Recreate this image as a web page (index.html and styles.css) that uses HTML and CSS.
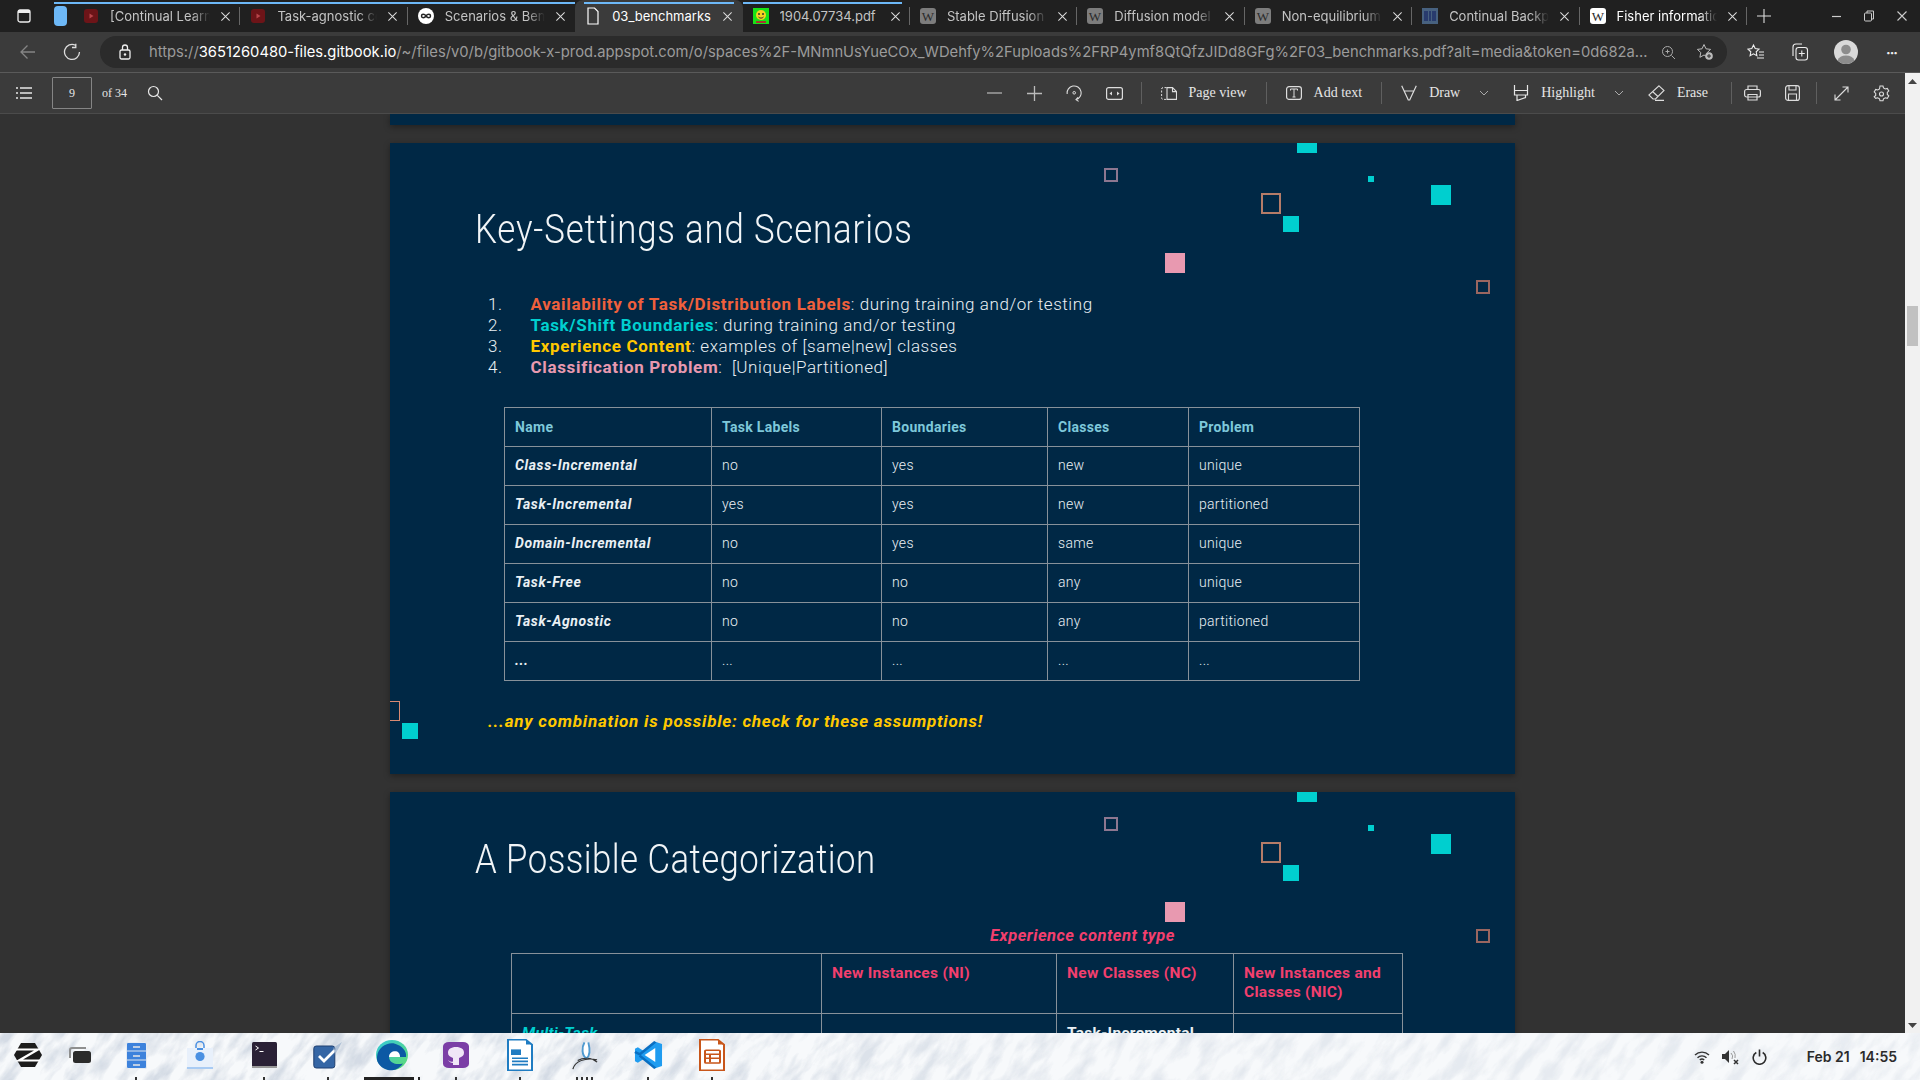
FILE: index.html
```html
<!DOCTYPE html>
<html lang="en">
  <head>
    <meta charset="UTF-8" />
    <title>03_benchmarks</title>
    <link rel="stylesheet" href="styles.css">
  </head>
  <body>
    <svg class="defs" width="0" height="0">
      <symbol id="x" viewBox="0 0 12 12"><path d="M1.5 1.5l9 9M10.5 1.5l-9 9" fill="none" stroke="currentColor" stroke-width="1.1"/></symbol>
      <symbol id="yt" viewBox="0 0 16 16"><rect x="1" y="1" width="14" height="14" rx="3" fill="#6d1418"/><path d="M6.5 5.5l4 2.5-4 2.5z" fill="#b8454a"/></symbol>
      <symbol id="wiki" viewBox="0 0 16 16"><rect width="16" height="16" rx="3" fill="currentColor"/><text x="8" y="12.5" font-family="Liberation Serif" font-size="13" text-anchor="middle" fill="#2b2b2b">W</text></symbol>
    </svg>

    <div class="tabbar">
      <div class="win-icon">
        <svg width="14" height="14" viewBox="0 0 14 14"><rect x="1" y="1" width="12" height="12" rx="2" fill="none" stroke="#eee" stroke-width="1.3"/><rect x="1" y="1" width="12" height="3" fill="#eee"/></svg>
      </div>
      <div class="pinned"><span class="pill"></span></div>
      <div class="tab strip"><svg class="ico" width="16" height="16"><use href="#yt"/></svg><span class="title">[Continual Learning with Deep</span><svg class="close" width="11" height="11"><use href="#x"/></svg></div>
      <div class="tab strip"><svg class="ico" width="16" height="16"><use href="#yt"/></svg><span class="title">Task-agnostic continual learning</span><svg class="close" width="11" height="11"><use href="#x"/></svg></div>
      <div class="tab strip no-sep"><svg class="ico" width="16" height="16" viewBox="0 0 16 16"><circle cx="8" cy="8" r="8" fill="#fff"/><path d="M8 8C6.5 5.8 3.5 5.8 3.5 8s3 2.2 4.5 0 4.5-2.2 4.5 0-3 2.2-4.5 0z" fill="none" stroke="#222" stroke-width="1.5"/></svg><span class="title">Scenarios &amp; Benchmarks</span><svg class="close" width="11" height="11"><use href="#x"/></svg></div>
      <div class="tab active"><svg class="ico" width="16" height="18" viewBox="0 0 16 18"><path d="M3 1h6.5L13 4.5V17H3z" fill="none" stroke="#fff" stroke-width="1.2"/></svg><span class="title">03_benchmarks</span><svg class="close" width="11" height="11"><use href="#x"/></svg></div>
      <div class="tab strip-end"><svg class="ico" width="16" height="16" viewBox="0 0 16 16"><rect width="16" height="16" fill="#17e317"/><circle cx="8" cy="7" r="5" fill="#f4d21f"/><circle cx="6" cy="6" r="1" fill="#333"/><circle cx="10" cy="6" r="1" fill="#333"/><path d="M5.5 9c1.5 1.500 3.500 1.500 5 0" fill="none" stroke="#333"/><path d="M3 14h10" stroke="#a33" stroke-width="2"/></svg><span class="title">1904.07734.pdf</span><svg class="close" width="11" height="11"><use href="#x"/></svg></div>
      <div class="tab dim"><svg class="ico" width="16" height="16"><use href="#wiki"/></svg><span class="title">Stable Diffusion - Wikipedia</span><svg class="close" width="11" height="11"><use href="#x"/></svg></div>
      <div class="tab dim"><svg class="ico" width="16" height="16"><use href="#wiki"/></svg><span class="title">Diffusion model - Wikipedia</span><svg class="close" width="11" height="11"><use href="#x"/></svg></div>
      <div class="tab dim"><svg class="ico" width="16" height="16"><use href="#wiki"/></svg><span class="title">Non-equilibrium thermodynamics</span><svg class="close" width="11" height="11"><use href="#x"/></svg></div>
      <div class="tab"><svg class="ico" width="16" height="16" viewBox="0 0 16 16"><rect width="16" height="16" fill="#47617f"/><path d="M3 3v10M5 3v10M8 3v10M11 3v10M13 3v10" stroke="#1c2c66" stroke-width="1.4"/></svg><span class="title">Continual Backprop: Stochastic</span><svg class="close" width="11" height="11"><use href="#x"/></svg></div>
      <div class="tab white-ico"><svg class="ico" width="16" height="16"><use href="#wiki"/></svg><span class="title">Fisher information - Wikipedia</span><svg class="close" width="11" height="11"><use href="#x"/></svg></div>
      <svg class="plus" width="14" height="14" viewBox="0 0 14 14"><path d="M7 0v14M0 7h14" stroke="#ddd" stroke-width="1.1"/></svg>
      <div class="win-ctrls">
        <svg width="11" height="11" viewBox="0 0 11 11"><path d="M1 5.500h9" stroke="#ccc" stroke-width="1.2"/></svg>
        <svg width="12" height="12" viewBox="0 0 12 12"><rect x="1.500" y="3" width="7" height="8" rx="1" fill="none" stroke="#ccc"/><path d="M4 3V1h6.500v8H8.500" fill="none" stroke="#ccc"/></svg>
        <svg width="12" height="12"><use href="#x"/></svg>
      </div>
    </div>

    <div class="addressrow">
      <svg class="nav-back" width="18" height="18" viewBox="0 0 18 18"><path d="M16 9H2M8.500 2.500L2 9l6.500 6.500" fill="none" stroke="#858585" stroke-width="1.300"/></svg>
      <svg class="nav-reload" width="18" height="18" viewBox="0 0 18 18"><path d="M12.500 2.300A7.500 7.500 0 1 0 16.500 9M12.800 0.800v3.700H9" fill="none" stroke="#ddd" stroke-width="1.300"/></svg>
      <div class="urlbar">
        <svg width="12" height="16" viewBox="0 0 12 16"><rect x="1" y="6" width="10" height="9" rx="1.500" fill="none" stroke="#eee" stroke-width="1.300"/><path d="M3.500 6V3.500a2.500 2.500 0 0 1 5 0V6" fill="none" stroke="#eee" stroke-width="1.300"/><circle cx="6" cy="10.500" r="1.200" fill="#eee"/></svg>
        <div class="url"><span class="url-dim">https://</span>3651260480-files.gitbook.io<span class="url-dim">/~/files/v0/b/gitbook-x-prod.appspot.com/o/spaces%2F-MNmnUsYueCOx_WDehfy%2Fuploads%2FRP4ymf8QtQfzJIDd8GFg%2F03_benchmarks.pdf?alt=media&amp;token=0d682a...</span></div>
        <svg class="url-zoom" width="15" height="15" viewBox="0 0 15 15"><circle cx="6.500" cy="6.500" r="5" fill="none" stroke="#aaa"/><path d="M10.500 10.500L14 14M4.500 6.500h4M6.500 4.500v4" fill="none" stroke="#aaa"/></svg>
        <svg class="url-star" width="18" height="18" viewBox="0 0 18 18"><path d="M8 1.500l2 4.300 4.600.6-3.400 3.200.9 4.700L8 12l-4.100 2.300.9-4.700L1.400 6.400 6 5.800z" fill="none" stroke="#bbb"/><circle cx="13" cy="13" r="3.800" fill="#bbb"/><path d="M11 13h4M13 11v4" stroke="#2b2b2b"/></svg>
      </div>
      <svg class="act-fav" width="18" height="18" viewBox="0 0 18 18"><path d="M6.500 2l1.700 3.600 3.800.5-2.800 2.700.7 3.900-3.400-1.900-3.400 1.900.7-3.900L1 6.100l3.800-.5z" fill="none" stroke="#eee" stroke-width="1.100"/><path d="M12 9h5M12 12h5M10 15h7" stroke="#eee"/></svg>
      <svg class="act-coll" width="18" height="18" viewBox="0 0 18 18"><rect x="5" y="4.500" width="11.500" height="12.500" rx="2.500" fill="none" stroke="#eee" stroke-width="1.100"/><path d="M2 13V4a3 3 0 0 1 3-3h6M10.800 7.500v6M7.800 10.500h6" fill="none" stroke="#eee" stroke-width="1.100"/></svg>
      <svg class="act-avatar" width="24" height="24" viewBox="0 0 24 24"><circle cx="12" cy="12" r="12" fill="#d9d9d9"/><circle cx="12" cy="9.500" r="4.800" fill="#8c8c8c"/><path d="M3.500 20.500a9 7.500 0 0 1 17 0 12 12 0 0 1-17 0z" fill="#8c8c8c"/></svg>
      <div class="act-more">···</div>
    </div>

    <div class="main">
      <div class="viewer-col">
        <div class="pdfbar">
          <svg class="pdf-list" width="18" height="14" viewBox="0 0 18 14"><path d="M5 2h12M5 7h12M5 12h12M1 2h2M1 7h2M1 12h2" stroke="#e8e8e8" stroke-width="1.300"/></svg>
          <div class="pagebox">9</div>
          <span class="pdf-of">of 34</span>
          <svg class="pdf-search" width="16" height="16" viewBox="0 0 16 16"><circle cx="6.500" cy="6.500" r="5" fill="none" stroke="#e8e8e8" stroke-width="1.200"/><path d="M10.300 10.300L15 15" stroke="#e8e8e8" stroke-width="1.200"/></svg>

          <div class="pdf-right">
            <div class="pbtn"><svg width="15" height="14" viewBox="0 0 15 14"><path d="M0 7h15" stroke="#aaa" stroke-width="1.400"/></svg></div>
            <div class="pbtn"><svg width="15" height="15" viewBox="0 0 15 15"><path d="M0 7.500h15M7.500 0v15" stroke="#bbb" stroke-width="1.300"/></svg></div>
            <div class="pbtn"><svg width="17" height="17" viewBox="0 0 17 17"><path d="M1.200 9A7 7 0 1 1 10 14.700M12 12.300L10 14.700l2.600 1.700" fill="none" stroke="#ddd" stroke-width="1.100"/><circle cx="8.200" cy="7.800" r="1.300" fill="none" stroke="#ddd"/></svg></div>
            <div class="pbtn"><svg width="17" height="13" viewBox="0 0 17 13"><rect x=".6" y=".6" width="15.800" height="11.800" rx="2" fill="none" stroke="#ddd" stroke-width="1.200"/><path d="M3.500 6.500l2.500-2v4zM13.500 6.500l-2.500-2v4z" fill="#ddd"/></svg></div>
            <i class="sep sep-first"></i>
            <div class="tbtn"><svg width="16" height="13" viewBox="0 0 16 13"><path d="M5.500 .6H2A1.500 1.500 0 0 0 .6 2v9A1.500 1.500 0 0 0 2 12.400h3.500" fill="none" stroke="#ddd" stroke-dasharray="2 1.500"/><path d="M6 .6h5.500l4 4v7.800H6z M11.500 .6v4h4" fill="none" stroke="#ddd" stroke-width="1.100"/></svg><span>Page view</span></div>
            <i class="sep"></i>
            <div class="tbtn"><svg width="16" height="14" viewBox="0 0 16 14"><rect x=".6" y=".6" width="14.800" height="12.800" rx="2.500" fill="none" stroke="#ddd" stroke-width="1.200"/><path d="M4.500 4.500V3h7v1.500M8 3v8M6.500 11h3" fill="none" stroke="#ddd"/></svg><span>Add text</span></div>
            <i class="sep"></i>
            <div class="tbtn"><svg width="16" height="16" viewBox="0 0 16 16"><path d="M.7 .7L7.300 15h1.400L15.300 .7M3 6h10" fill="none" stroke="#ddd" stroke-width="1.200"/></svg><span>Draw</span><svg class="chev" width="10" height="6" viewBox="0 0 10 6"><path d="M1 1l4 4 4-4" fill="none" stroke="#aaa"/></svg></div>
            <div class="tbtn after-chev"><svg width="16" height="16" viewBox="0 0 16 16"><path d="M1.500 0v5.500h13V0M1.500 5.500V10h13V5.500M4 10v5.500l8.500-3V10" fill="none" stroke="#e6e6e6" stroke-width="1.200"/></svg><span>Highlight</span><svg class="chev" width="10" height="6" viewBox="0 0 10 6"><path d="M1 1l4 4 4-4" fill="none" stroke="#aaa"/></svg></div>
            <div class="tbtn after-chev erase"><svg width="17" height="16" viewBox="0 0 17 16"><path d="M11 .8l5 4.700-8.500 8.500H5L.9 10zM4.500 6.500l5.500 5M7 15.400h9" fill="none" stroke="#ddd" stroke-width="1.100"/></svg><span>Erase</span></div>
            <i class="sep"></i>
            <div class="pbtn"><svg width="17" height="16" viewBox="0 0 17 16"><rect x=".6" y="4.500" width="15.800" height="7.500" rx="2" fill="none" stroke="#ddd" stroke-width="1.200"/><path d="M4 4.500V1h9v3.500M4 9.500h9V15H4z" fill="none" stroke="#ddd" stroke-width="1.200"/></svg></div>
            <div class="pbtn"><svg width="15" height="16" viewBox="0 0 15 16"><rect x=".6" y=".6" width="13.800" height="14.800" rx="2.500" fill="none" stroke="#ddd" stroke-width="1.200"/><path d="M4 1v4h7V1M3.500 15V9h8v6" fill="none" stroke="#ddd" stroke-width="1.100"/></svg></div>
            <i class="sep sep-tight"></i>
            <div class="pbtn"><svg width="15" height="15" viewBox="0 0 15 15"><path d="M1 14L14 1M8.500 1H14v5.500M1 8.500V14h5.500" fill="none" stroke="#ddd" stroke-width="1.100"/></svg></div>
            <div class="pbtn"><svg width="17" height="17" viewBox="0 0 17 17"><path d="M7 1h3l.5 2 1.800 1 2-.6 1.500 2.600-1.500 1.400v2l1.500 1.400-1.500 2.600-2-.6-1.800 1-.5 2H7l-.5-2-1.800-1-2 .6L1.200 11.800l1.500-1.400v-2L1.200 7l1.500-2.600 2 .6 1.800-1z" fill="none" stroke="#ddd" stroke-width="1.100"/><circle cx="8.500" cy="9" r="2" fill="none" stroke="#ddd" stroke-width="1.100"/></svg></div>
          </div>
        </div>

        <div class="viewer">
          <div class="page-tail"></div>

          <section class="page">
            <i class="sq cy-top"></i><i class="sq cy-tiny"></i><i class="sq cy-big"></i><i class="sq cy-mid"></i>
            <i class="sq pink"></i><i class="sq out-salmon"></i><i class="sq out-mauve"></i><i class="sq out-brown"></i>
            <i class="sq out-left"></i><i class="sq cy-left"></i>

            <h1 class="slide-title">Key-Settings and Scenarios</h1>
            <ol class="points">
              <li><b class="c-orange">Availability of Task/Distribution Labels</b>: during training and/or testing</li>
              <li><b class="c-cyan">Task/Shift Boundaries</b>: during training and/or testing</li>
              <li><b class="c-yellow">Experience Content</b>: examples of [same|new] classes</li>
              <li><b class="c-pink">Classification Problem</b>:&nbsp;&nbsp;[Unique|Partitioned]</li>
            </ol>
            <table class="grid settings">
              <colgroup><col class="s1"><col class="s2"><col class="s3"><col class="s4"><col class="s5"></colgroup>
              <tr class="head"><th>Name</th><th>Task Labels</th><th>Boundaries</th><th>Classes</th><th>Problem</th></tr>
              <tr><th>Class-Incremental</th><td>no</td><td>yes</td><td>new</td><td>unique</td></tr>
              <tr><th>Task-Incremental</th><td>yes</td><td>yes</td><td>new</td><td>partitioned</td></tr>
              <tr><th>Domain-Incremental</th><td>no</td><td>yes</td><td>same</td><td>unique</td></tr>
              <tr><th>Task-Free</th><td>no</td><td>no</td><td>any</td><td>unique</td></tr>
              <tr><th>Task-Agnostic</th><td>no</td><td>no</td><td>any</td><td>partitioned</td></tr>
              <tr><th>...</th><td>...</td><td>...</td><td>...</td><td>...</td></tr>
            </table>
            <p class="remark">...any combination is possible: check for these assumptions!</p>
          </section>

          <section class="page page-two">
            <i class="sq cy-top"></i><i class="sq cy-tiny"></i><i class="sq cy-big"></i><i class="sq cy-mid"></i>
            <i class="sq pink"></i><i class="sq out-salmon"></i><i class="sq out-mauve"></i><i class="sq out-brown"></i>

            <h1 class="slide-title">A Possible Categorization</h1>
            <p class="exp-label">Experience content type</p>
            <table class="grid categories">
              <colgroup><col class="k1"><col class="k2"><col class="k3"><col class="k4"></colgroup>
              <tr class="cat-head"><td></td><td>New Instances (NI)</td><td>New Classes (NC)</td><td>New Instances and Classes (NIC)</td></tr>
              <tr class="cat-row"><th class="multi">Multi-Task</th><td></td><td class="strong">Task-Incremental</td><td></td></tr>
            </table>
          </section>
        </div>
      </div>

      <div class="scrollbar">
        <svg width="9" height="5" viewBox="0 0 9 5"><path d="M0 5l4.500-5L9 5z" fill="#444"/></svg>
        <div class="thumb"></div>
        <svg class="arrow-down" width="9" height="5" viewBox="0 0 9 5"><path d="M0 0l4.500 5L9 0z" fill="#444"/></svg>
      </div>
    </div>

    <div class="taskbar">
      <svg class="snow" width="100%" height="100%">
        <filter id="snowf" x="0" y="0" width="1" height="1"><feTurbulence type="fractalNoise" baseFrequency="0.028 0.075" numOctaves="5" seed="11"/><feColorMatrix values="0 0 0 0 .66  0 0 0 0 .71  0 0 0 0 .78  2.800 0 0 0 -1.150"/></filter>
        <g transform="rotate(-52 960 24)"><rect x="-200" y="-1100" width="2320" height="2250" filter="url(#snowf)"/></g>
      </svg>
      <div class="dock">
        <div class="app app-first"><svg width="28" height="24" viewBox="0 0 28 24"><path d="M7 0h14l7 12-7 12H7L0 12z" fill="#1c1c1c"/><path d="M2 6.500h22L5 17.500h21" fill="none" stroke="#fff" stroke-width="2.200"/></svg></div>
        <div class="app app-second"><svg width="22" height="16" viewBox="0 0 22 16"><path d="M1 11V3a2 2 0 0 1 2-2h14" fill="none" stroke="#8f8f8f" stroke-width="2"/><rect x="4" y="4" width="18" height="12" rx="2.500" fill="#2b2b2b"/></svg></div>
        <div class="app dot"><svg width="21" height="27" viewBox="0 0 21 27"><rect x=".5" y=".5" width="20" height="26" rx="1.500" fill="#3d82dc" stroke="#e6ecf4"/><path d="M0 9h21M0 18h21" stroke="#dfe6f0"/><path d="M7 5h7M7 14h7M7 23h7" stroke="#e8e8e8" stroke-width="1.600"/></svg></div>
        <div class="app"><svg width="26" height="28" viewBox="0 0 26 28"><path d="M9 8V4.500a4 4 0 0 1 8 0V8" fill="none" stroke="#4a90e2" stroke-width="1.500"/><rect y="7" width="26" height="19" fill="#e8f0fb"/><rect y="26" width="26" height="2" fill="#a9cbf3"/><circle cx="13" cy="15.500" r="4.600" fill="#4a90e2"/><rect x="10" y="7" width="6" height="2" fill="#4a90e2"/></svg></div>
        <div class="app dot"><svg width="25" height="26" viewBox="0 0 25 26"><rect width="25" height="26" rx="1.500" fill="#2a2136"/><rect y="24" width="25" height="2" fill="#999"/><path d="M3.500 4l3 2-3 2M7.500 9.500h4" stroke="#fff" fill="none"/></svg></div>
        <div class="app dot"><svg width="31" height="27" viewBox="0 0 31 27"><rect x=".8" y="4" width="21" height="22" rx="2.500" fill="#3566a5" stroke="#1f3f70"/><path d="M6 14l5 5L22 8" fill="none" stroke="#fff" stroke-width="2.800"/><path d="M20 6l9-6-7 13z" fill="#8fa8c8" opacity=".6"/></svg></div>
        <div class="app edge"><svg width="32" height="32" viewBox="0 0 32 34" preserveAspectRatio="none"><defs><linearGradient id="eg" x1="0" y1="0" x2="1" y2="1"><stop offset="0" stop-color="#36c7d8"/><stop offset="1" stop-color="#60dc74"/></linearGradient></defs><circle cx="16" cy="17" r="16" fill="url(#eg)"/><path d="M1 19C2 8 12 3 19 5c7 2 12 8 11 14H13c0 6 7 9 14 7-4 6-10 8-15 7C6 31 0 26 1 19z" fill="#0c59a4"/><path d="M13 19c0-4 3-6 6-6s5 2 5 6z" fill="#fff"/></svg></div>
        <div class="app dot"><svg width="26" height="26" viewBox="0 0 26 36" preserveAspectRatio="none"><rect width="26" height="36" rx="6" fill="#7b3ea6"/><path d="M13 7c-5 0-8 3-8 8 0 4 2 6 5 7v5c-3 1-4-1-5-2 1 3 3 4 5 4v3h6v-10c3-1 5-3 5-7 0-5-3-8-8-8z" fill="#f0e6f7"/></svg></div>
        <div class="app dot"><svg width="26" height="32" viewBox="0 0 26 40" preserveAspectRatio="none"><path d="M1 1h18l6 6v32H1z" fill="#fff" stroke="#1f7cc2" stroke-width="2"/><path d="M19 1l6 6h-6z" fill="#1f7cc2"/><rect x="4" y="13" width="10" height="7" fill="#1f7cc2"/><path d="M5 24h16M5 28h16M5 32h16" stroke="#1f7cc2" stroke-width="2"/></svg></div>
        <div class="app dots4"><svg width="29" height="30" viewBox="0 0 30 38" preserveAspectRatio="none"><path d="M15 3c-3 6-3 17 2 20 4-3 4-10 2-20" fill="#fff" stroke="#4f9ad0" stroke-width="2"/><path d="M3 37c2-10 12-15 25-12M8 26c6-4 14-4 20 2" fill="none" stroke="#333" stroke-width="1.300"/></svg></div>
        <div class="app dot"><svg width="29" height="28" viewBox="0 0 30 36" preserveAspectRatio="none"><path d="M22 1L10 13 4 8 1 10v16l3 2 6-5 12 12 7-3V4z" fill="#1f9cf0"/><path d="M22 9v18l-11-9z" fill="#fff"/><path d="M22 1L6 17 1 14M22 35L6 19" fill="none" stroke="#0a6fc2" stroke-width="3"/></svg></div>
        <div class="app dot"><svg width="26" height="32" viewBox="0 0 26 40" preserveAspectRatio="none"><path d="M1 1h18l6 6v32H1z" fill="#fff" stroke="#c8561a" stroke-width="2"/><path d="M19 1l6 6h-6z" fill="#c8561a"/><rect x="6" y="14" width="15" height="16" rx="1" fill="none" stroke="#c8561a" stroke-width="2"/><path d="M6 19h15M6 24h15M11 19v10" stroke="#c8561a" stroke-width="2"/></svg></div>
      </div>
      <div class="tray">
        <svg width="16" height="14" viewBox="0 0 16 14"><path d="M1 5a10 10 0 0 1 14 0M3.500 7.700a6.500 6.500 0 0 1 9 0M5.800 10a3.200 3.200 0 0 1 4.400 0" fill="none" stroke="#333" stroke-width="1.400"/><circle cx="8" cy="12.300" r="1.500" fill="#333"/></svg>
        <svg width="18" height="16" viewBox="0 0 18 16"><path d="M0 5h3l4-4v13l-4-4H0z" fill="#333"/><path d="M9 4a5 5 0 0 1 1 6M11.500 2a8 8 0 0 1 1.500 7" fill="none" stroke="#999"/><path d="M12 11l4 4M16 11l-4 4" stroke="#333" stroke-width="1.500"/></svg>
        <svg width="15" height="16" viewBox="0 0 15 16"><path d="M4.300 3.500a6.300 6.300 0 1 0 6.400 0M7.500 .5v7" fill="none" stroke="#2b2b2b" stroke-width="1.600"/></svg>
        <div class="clock"><span>Feb 21</span><span>14:55</span></div>
      </div>
    </div>
  </body>
</html>
```

FILE: styles.css
```css
* {
  box-sizing: border-box;
}
html,
body {
  margin: 0;
  height: 100%;
  overflow: hidden;
}
body {
  display: flex;
  flex-direction: column;
  height: 1080px;
  font-family: "Inter", "Liberation Sans", sans-serif;
  background-color: #323232;
}
.defs {
  position: absolute;
}

/* browser tabs */
.tabbar {
  display: flex;
  align-items: center;
  height: 32px;
  flex: none;
  background-color: #202020;
  color: #ccc;
}
.win-icon {
  display: flex;
  justify-content: center;
  width: 48px;
}
.pinned {
  position: relative;
  width: 25px;
  height: 32px;
  padding: 6px 0 0 6px;
}
.pinned::before {
  content: "";
  position: absolute;
  top: 2px;
  left: 6px;
  right: 0;
  height: 2px;
  background-color: #6db8f7;
}
.pill {
  display: block;
  width: 13px;
  height: 20px;
  border-radius: 4px;
  background-color: #6db8f7;
}
.tab {
  position: relative;
  display: flex;
  align-items: center;
  width: 167.4px;
  height: 32px;
  flex: none;
  padding-left: 10px;
  color: #c4c4c4;
  font-size: 13px;
}
.tab::after {
  content: "";
  position: absolute;
  right: 0;
  top: 7px;
  bottom: 7px;
  width: 1px;
  background-color: #666;
}
.tab.no-sep::after,
.tab.active::after {
  display: none;
}
.strip::before,
.active::before,
.strip-end::before {
  content: "";
  position: absolute;
  top: 2px;
  left: 0;
  right: 0;
  height: 2px;
  background-color: #6db8f7;
}
.active::before {
  left: 9px;
  right: 9px;
}
.strip-end::before {
  right: 8px;
}
.tab.active {
  background-color: #3b3b3b;
  color: #fff;
  border-radius: 8px 8px 0 0;
}
.ico {
  flex: none;
}
.title {
  width: 100px;
  margin-left: 11px;
  flex: none;
  overflow: hidden;
  white-space: nowrap;
  -webkit-mask-image: linear-gradient(to right, #000 82%, transparent 100%);
  mask-image: linear-gradient(to right, #000 82%, transparent 100%);
}
.active .title,
.strip-end .title {
  -webkit-mask-image: none;
  mask-image: none;
}
.close {
  margin-left: 10px;
  flex: none;
  color: #ddd;
}
.dim .ico {
  color: #7d7d7d;
}
.white-ico .ico {
  color: #fff;
}
.white-ico {
  color: #fff;
}
.plus {
  margin-left: 10px;
}
.win-ctrls {
  display: flex;
  align-items: center;
  gap: 21px;
  margin-left: auto;
  padding-right: 12px;
  color: #ccc;
}

/* address row */
.addressrow {
  display: flex;
  align-items: center;
  height: 41px;
  flex: none;
  background-color: #3b3b3b;
  border-bottom: 1px solid #5a5a5a;
}
.nav-back {
  margin-left: 19px;
}
.nav-reload {
  margin-left: 26px;
}
.urlbar {
  display: flex;
  align-items: center;
  width: 1627px;
  height: 32px;
  margin-left: 19px;
  padding-left: 19px;
  border-radius: 16px;
  background-color: #2b2b2b;
}
.url {
  width: 1500px;
  margin-left: 18px;
  overflow: hidden;
  white-space: nowrap;
  font-size: 14.750px;
  color: #fff;
}
.url-dim {
  color: #9b9b9b;
}
.url-zoom {
  margin-left: 12px;
}
.url-star {
  margin-left: 20px;
}
.act-fav {
  margin-left: 20px;
}
.act-coll {
  margin-left: 26px;
}
.act-avatar {
  margin-left: 25px;
}
.act-more {
  margin-left: 28px;
  color: #eee;
  font-size: 14px;
  font-weight: 700;
  letter-spacing: -1px;
}

/* main area */
.main {
  display: flex;
  flex: 1;
  min-height: 0;
}
.viewer-col {
  display: flex;
  flex-direction: column;
  flex: 1;
  min-width: 0;
}
.pdfbar {
  display: flex;
  align-items: center;
  height: 41px;
  flex: none;
  background-color: #3b3b3b;
  border-bottom: 1px solid #4b4b4b;
  color: #e6e6e6;
  font-family: "Liberation Serif", serif;
  font-size: 14px;
}
.pdf-list {
  margin-left: 15px;
}
.pagebox {
  width: 40px;
  height: 32px;
  margin-left: 19px;
  border: 1px solid #858585;
  border-radius: 1px;
  text-align: center;
  line-height: 30px;
  font-size: 12px;
}
.pdf-of {
  margin-left: 10px;
  font-size: 12px;
}
.pdf-search {
  margin-left: 20px;
}
.pdf-right {
  display: flex;
  align-items: center;
  margin-left: auto;
  padding-right: 4px;
}
.pbtn {
  display: flex;
  align-items: center;
  justify-content: center;
  width: 40px;
  height: 40px;
}
.tbtn {
  display: flex;
  align-items: center;
  padding: 0 19px;
}
.tbtn span {
  margin-left: 12px;
}
.after-chev {
  padding-left: 24px;
}
.erase {
  padding-right: 23px;
}
.tbtn:has(.chev) {
  padding-right: 0;
}
.chev {
  margin-left: 19px;
}
.sep {
  width: 1px;
  height: 22px;
  background-color: #5f5f5f;
}
.sep-first {
  margin-left: 6px;
}
.sep-tight {
  margin: 0 4px;
}

/* pdf pages */
.viewer {
  display: flex;
  flex-direction: column;
  align-items: center;
  gap: 18px;
  flex: 1;
  min-height: 0;
  overflow: hidden;
  background-color: #323232;
  font-family: "Roboto", "Liberation Sans", sans-serif;
}
.page-tail {
  width: 1125px;
  height: 11px;
  flex: none;
  background-color: #002845;
  box-shadow: 0 2px 6px rgba(0, 0, 0, 0.35);
}
.page {
  position: relative;
  width: 1125px;
  height: 631px;
  flex: none;
  padding: 64px 0 0 85px;
  background-color: #002845;
  box-shadow: 0 2px 6px rgba(0, 0, 0, 0.35);
  color: #eaf0f4;
}
.page-two {
  padding-top: 45px;
}
/* the slide font is a tall condensed one, none is installed */
.slide-title {
  margin: 0;
  font-family: "Roboto", sans-serif;
  font-size: 40px;
  line-height: 46px;
  font-weight: 300;
  letter-spacing: 0.96px;
  transform: scaleX(0.87);
  transform-origin: left center;
  white-space: nowrap;
  color: #f1f5f7;
}
.page-two .slide-title {
  letter-spacing: 0.5px;
}
.points {
  margin: 41px 0 0 13px;
  padding: 0;
  list-style: none;
  counter-reset: point;
  font-size: 17px;
  line-height: 21px;
  font-weight: 300;
  letter-spacing: 0.56px;
}
.points li {
  counter-increment: point;
}
.points li::before {
  content: counter(point) ".";
  display: inline-block;
  width: 42.500px;
}
.points b {
  font-weight: 700;
  letter-spacing: 0.66px;
}
.c-orange {
  color: #f0603c;
}
.c-cyan {
  color: #00cfcf;
}
.c-yellow {
  color: #ffc800;
}
.c-pink {
  color: #e899b0;
}

.grid {
  border-collapse: collapse;
  table-layout: fixed;
}
.grid th,
.grid td {
  padding: 0 10px 2px;
  border: 1.5px solid #87919a;
  text-align: left;
  font-size: 14px;
  letter-spacing: 0.3px;
}
.settings {
  width: 856px;
  margin: 29px 0 0 29px;
}
.settings tr {
  height: 39px;
}
.settings td {
  font-weight: 300;
}
.settings th {
  font-style: italic;
  font-weight: 700;
  letter-spacing: 0.6px;
}
.settings .head th {
  padding-bottom: 0;
  font-style: normal;
  letter-spacing: 0.3px;
  color: #7ec8da;
}
.s1 {
  width: 207px;
}
.s2 {
  width: 170px;
}
.s3 {
  width: 166px;
}
.s4 {
  width: 141px;
}
.remark {
  margin: 29px 0 0 13px;
  font-size: 17px;
  line-height: 22px;
  font-weight: 700;
  font-style: italic;
  letter-spacing: 0.77px;
  color: #ffc800;
}
.exp-label {
  margin: 43px 0 7px 515px;
  font-size: 16.500px;
  line-height: 20px;
  font-weight: 700;
  font-style: italic;
  letter-spacing: 0.5px;
  color: #f33f6e;
}
.categories {
  width: 892px;
  margin-left: 36px;
}
.k1 {
  width: 310px;
}
.k2 {
  width: 235px;
}
.k3 {
  width: 177px;
}
.cat-head {
  height: 60px;
}
.cat-head td {
  vertical-align: top;
  padding-top: 10px;
  font-size: 15.500px;
  line-height: 19px;
  font-weight: 700;
  color: #f33f6e;
}
.cat-row {
  height: 60px;
}
.cat-row th,
.cat-row td {
  vertical-align: top;
  padding-top: 10px;
  font-size: 15.500px;
}
.multi {
  font-style: italic;
  color: #00cfcf;
}
.strong {
  font-weight: 700;
}

/* decoration squares on the slide */
.sq {
  position: absolute;
  display: block;
}
.cy-top,
.cy-tiny,
.cy-big,
.cy-mid,
.cy-left {
  background-color: #00cfcf;
}
.cy-top {
  left: 907px;
  top: 0;
  width: 20px;
  height: 10px;
}
.cy-tiny {
  left: 978px;
  top: 33px;
  width: 6px;
  height: 6px;
}
.cy-big {
  left: 1041px;
  top: 42px;
  width: 20px;
  height: 20px;
}
.cy-mid {
  left: 893px;
  top: 73px;
  width: 16px;
  height: 16px;
}
.pink {
  left: 775px;
  top: 110px;
  width: 20px;
  height: 20px;
  background-color: #e899b0;
}
.out-salmon {
  left: 871px;
  top: 50px;
  width: 20px;
  height: 21px;
  border: 2px solid #b57c68;
}
.out-mauve {
  left: 714px;
  top: 25px;
  width: 14px;
  height: 14px;
  border: 2px solid #8d7790;
}
.out-brown {
  left: 1086px;
  top: 137px;
  width: 14px;
  height: 14px;
  border: 2px solid #9a6660;
}
.out-left {
  left: 0;
  top: 558px;
  width: 10px;
  height: 20px;
  border: 1px solid #d98a72;
  border-left: 0;
}
.cy-left {
  left: 12px;
  top: 580px;
  width: 16px;
  height: 16px;
}

/* scrollbar */
.scrollbar {
  position: relative;
  display: flex;
  flex-direction: column;
  align-items: center;
  width: 15px;
  flex: none;
  padding-top: 6px;
  background-color: #f1f1f1;
}
.thumb {
  width: 11px;
  height: 40px;
  margin-top: 222px;
  background-color: #c1c1c1;
}
.arrow-down {
  margin-top: auto;
  margin-bottom: 5px;
}

/* desktop panel */
.taskbar {
  position: relative;
  display: flex;
  align-items: center;
  height: 47px;
  flex: none;
  overflow: hidden;
  background-color: #f7f9fb;
}
.snow {
  position: absolute;
  left: 0;
  top: 0;
  -webkit-mask-image: linear-gradient(to right, #000 30%, rgba(0, 0, 0, 0.55) 60%, rgba(0, 0, 0, 0.45) 100%);
  mask-image: linear-gradient(to right, #000 30%, rgba(0, 0, 0, 0.55) 60%, rgba(0, 0, 0, 0.45) 100%);
}
.dock {
  position: relative;
  display: flex;
  align-items: center;
  height: 100%;
}
.app {
  position: relative;
  display: flex;
  align-items: center;
  justify-content: center;
  width: 64px;
  height: 100%;
  padding-bottom: 3px;
}
.app-first {
  width: 56px;
}
.app-second {
  width: 48px;
}
.dot::after,
.dots4::after,
.edge::after {
  content: "";
  position: absolute;
  left: 31px;
  bottom: 0;
  width: 2px;
  height: 3px;
  background-color: #333;
}
.dots4::after {
  left: 24px;
  box-shadow: 5px 0 #333, 10px 0 #333, 15px 0 #333;
}
.edge::after {
  left: 4px;
  width: 50px;
  background-color: #222;
  box-shadow: 4px 0 #f7f9fb, 6px 0 #222;
}
.tray {
  position: relative;
  display: flex;
  align-items: center;
  margin-left: auto;
  gap: 12px;
  padding-right: 23px;
  color: #2b2b2b;
  font-size: 14px;
  font-weight: 600;
}
.clock {
  display: flex;
  gap: 10px;
  margin-left: 28px;
}
```
